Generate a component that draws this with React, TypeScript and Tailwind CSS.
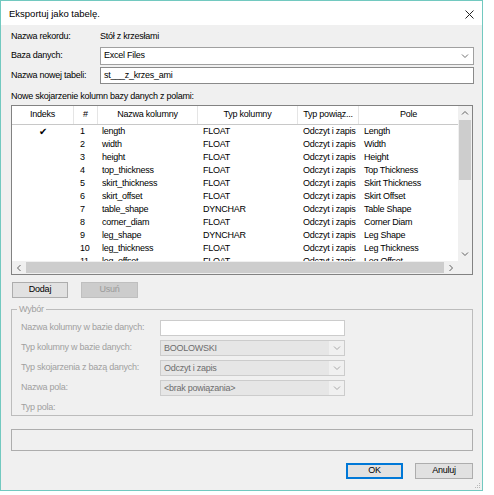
import React from "react";

const rows = [
  ["1", "length", "FLOAT", "Odczyt i zapis", "Length", true],
  ["2", "width", "FLOAT", "Odczyt i zapis", "Width"],
  ["3", "height", "FLOAT", "Odczyt i zapis", "Height"],
  ["4", "top_thickness", "FLOAT", "Odczyt i zapis", "Top Thickness"],
  ["5", "skirt_thickness", "FLOAT", "Odczyt i zapis", "Skirt Thickness"],
  ["6", "skirt_offset", "FLOAT", "Odczyt i zapis", "Skirt Offset"],
  ["7", "table_shape", "DYNCHAR", "Odczyt i zapis", "Table Shape"],
  ["8", "corner_diam", "FLOAT", "Odczyt i zapis", "Corner Diam"],
  ["9", "leg_shape", "DYNCHAR", "Odczyt i zapis", "Leg Shape"],
  ["10", "leg_thickness", "FLOAT", "Odczyt i zapis", "Leg Thickness"],
  ["11", "leg_offset", "FLOAT", "Odczyt i zapis", "Leg Offset"],
] as const;

function Chevron({ dir, color = "#606060" }: { dir: "up" | "down" | "left" | "right"; color?: string }) {
  const d =
    dir === "down"
      ? "M1 1.5 L4 4.5 L7 1.5"
      : dir === "up"
        ? "M1 4.5 L4 1.5 L7 4.5"
        : dir === "left"
          ? "M4.5 1 L1.5 4 L4.5 7"
          : "M1.5 1 L4.5 4 L1.5 7";
  const vertical = dir === "up" || dir === "down";
  return (
    <svg width={vertical ? 8 : 6} height={vertical ? 6 : 8} viewBox={vertical ? "0 0 8 6" : "0 0 6 8"}>
      <path d={d} fill="none" stroke={color} strokeWidth="1" />
    </svg>
  );
}

function DisabledCombo({ text }: { text: string }) {
  return (
    <div className="flex h-[16px] w-[185px] border border-[#cccccc] bg-[#f0f0f0]">
      <div className="flex flex-1 items-center bg-[#e6e6e6] pl-[3px] leading-none text-[#6d6d6d]">{text}</div>
      <div className="flex w-[15px] items-center justify-center">
        <Chevron dir="down" color="#a8a8a8" />
      </div>
    </div>
  );
}

export default function App() {
  const cols = [
    { w: "w-[62px]", title: "Indeks" },
    { w: "w-[24px]", title: "#" },
    { w: "w-[100px]", title: "Nazwa kolumny" },
    { w: "w-[100px]", title: "Typ kolumny" },
    { w: "w-[61px]", title: "Typ powiąz..." },
    { w: "w-[99px]", title: "Pole" },
  ];

  return (
    <div
      className="h-[495px] w-[494px] bg-white text-[9px] tracking-[-0.25px] text-black"
      style={{ fontFamily: '"Liberation Sans", Arial, sans-serif' }}
    >
      <div className="relative flex h-[491px] w-[483px] flex-col border border-[#72c9c0] bg-[#f0f0f0]">
        {/* title bar */}
        <div className="flex h-[24px] items-center justify-between bg-white pl-[8px] pr-[8px] pt-[2px]">
          <span className="text-[9.5px] tracking-normal">Eksportuj jako tabelę.</span>
          <svg width="9" height="9" viewBox="0 0 9 9">
            <path d="M0.5 0.5 L8.5 8.5 M8.5 0.5 L0.5 8.5" stroke="#222" strokeWidth="1" />
          </svg>
        </div>

        <div className="flex flex-col pl-[10px] pt-[5px]">
          <div className="flex h-[14px] items-center">
            <span className="w-[89px]">Nazwa rekordu:</span>
            <span>Stół z krzesłami</span>
          </div>

          <div className="mt-[3px] flex h-[18px] items-center">
            <span className="w-[89px]">Baza danych:</span>
            <div className="flex h-[18px] w-[374px] items-center justify-between border border-[#a0a0a0] bg-white pl-[3px] pr-[4px]">
              <span>Excel Files</span>
              <Chevron dir="down" color="#707070" />
            </div>
          </div>

          <div className="mt-[2px] flex h-[17px] items-center">
            <span className="w-[89px]">Nazwa nowej tabeli:</span>
            <div className="flex h-[17px] w-[374px] items-center border border-[#8a8a8a] bg-white pl-[3px]">
              st___z_krzes_ami
            </div>
          </div>

          <div className="mt-[6px] flex h-[14px] items-center">Nowe skojarzenie kolumn bazy danych z polami:</div>

          {/* table */}
          <div className="mt-[1px] grid h-[170px] w-[462px] grid-cols-[446px_14px] grid-rows-[155px_13px] border border-[#828282] bg-white">
            <div className="overflow-hidden">
              <div className="flex h-[19px] border-b border-[#c8c8c8]">
                {cols.map((c) => (
                  <div key={c.title} className={`${c.w} flex items-center justify-center border-r border-[#e5e5e5] last:border-r-0`}>
                    {c.title}
                  </div>
                ))}
              </div>
              {rows.map((r) => (
                <div key={r[0]} className="flex h-[13px] items-center leading-[13px]">
                  <div className="flex w-[62px] justify-center">
                    {r[5] ? <span className="text-[10px] leading-none">✔</span> : null}
                  </div>
                  <div className="w-[24px] pl-[6px]">{r[0]}</div>
                  <div className="w-[100px] pl-[4px]">{r[1]}</div>
                  <div className="w-[100px] pl-[5px]">{r[2]}</div>
                  <div className="w-[61px] pl-[5px] whitespace-nowrap">{r[3]}</div>
                  <div className="w-[99px] pl-[5px] whitespace-nowrap">{r[4]}</div>
                </div>
              ))}
            </div>

            {/* vertical scrollbar */}
            <div className="flex flex-col bg-[#f0f0f0]">
              <div className="flex h-[14px] items-center justify-center">
                <Chevron dir="up" />
              </div>
              <div className="mx-[1px] h-[60px] bg-[#cdcdcd]" />
              <div className="flex-1" />
              <div className="flex h-[14px] items-center justify-center">
                <Chevron dir="down" />
              </div>
            </div>

            {/* horizontal scrollbar */}
            <div className="flex bg-[#f0f0f0]">
              <div className="flex w-[14px] items-center justify-center">
                <Chevron dir="left" />
              </div>
              <div className="my-[1px] flex-1 bg-[#cdcdcd]" />
              <div className="flex w-[14px] items-center justify-center">
                <Chevron dir="right" />
              </div>
            </div>
            <div className="bg-[#f0f0f0]" />
          </div>

          {/* buttons */}
          <div className="mt-[7px] flex gap-[13px] pl-[1px]">
            <button className="flex h-[16px] w-[56px] items-center justify-center border border-[#adadad] bg-[#e1e1e1]">
              Dodaj
            </button>
            <button className="flex h-[16px] w-[57px] items-center justify-center border border-[#bfbfbf] bg-[#cccccc] text-[#9a9a9a]">
              Usuń
            </button>
          </div>

          {/* group box */}
          <div className="relative mt-[11px] flex h-[107px] w-[462px] flex-col gap-[4px] border border-[#bcbcbc] pl-[9px] pt-[10px] text-[#a0a0a0]">
            <span className="absolute left-[5px] top-[-6px] bg-[#f0f0f0] px-[2px] leading-[11px]">Wybór</span>
            <div className="flex h-[16px] items-center">
              <span className="w-[139px]">Nazwa kolumny w bazie danych:</span>
              <div className="h-[16px] w-[185px] border border-[#cccccc] bg-white" />
            </div>
            <div className="flex h-[16px] items-center">
              <span className="w-[139px]">Typ kolumny w bazie danych:</span>
              <DisabledCombo text="BOOLOWSKI" />
            </div>
            <div className="flex h-[16px] items-center">
              <span className="w-[139px]">Typ skojarzenia z bazą danych:</span>
              <DisabledCombo text="Odczyt i zapis" />
            </div>
            <div className="flex h-[16px] items-center">
              <span className="w-[139px]">Nazwa pola:</span>
              <DisabledCombo text="<brak powiązania>" />
            </div>
            <div className="flex h-[15px] items-center">Typ pola:</div>
          </div>

          {/* status box */}
          <div className="mt-[13px] h-[22px] w-[462px] border border-[#adadad] bg-[#f0f0f0]" />

          {/* ok / cancel */}
          <div className="mt-[12px] flex w-[462px] justify-end gap-[12px]">
            <button className="flex h-[16px] w-[57px] items-center justify-center border-2 border-[#0078d7] bg-[#e1e1e1]">
              OK
            </button>
            <button className="flex h-[16px] w-[58px] items-center justify-center border border-[#adadad] bg-[#e1e1e1]">
              Anuluj
            </button>
          </div>
        </div>

        {/* resize grip */}
        <svg className="absolute bottom-[1px] right-[1px]" width="8" height="8" viewBox="0 0 8 8">
          <rect x="6" y="2" width="1" height="1" fill="#b8b8b8" />
          <rect x="4" y="4" width="1" height="1" fill="#b8b8b8" />
          <rect x="6" y="4" width="1" height="1" fill="#b8b8b8" />
          <rect x="2" y="6" width="1" height="1" fill="#b8b8b8" />
          <rect x="4" y="6" width="1" height="1" fill="#b8b8b8" />
          <rect x="6" y="6" width="1" height="1" fill="#b8b8b8" />
        </svg>
      </div>
    </div>
  );
}
